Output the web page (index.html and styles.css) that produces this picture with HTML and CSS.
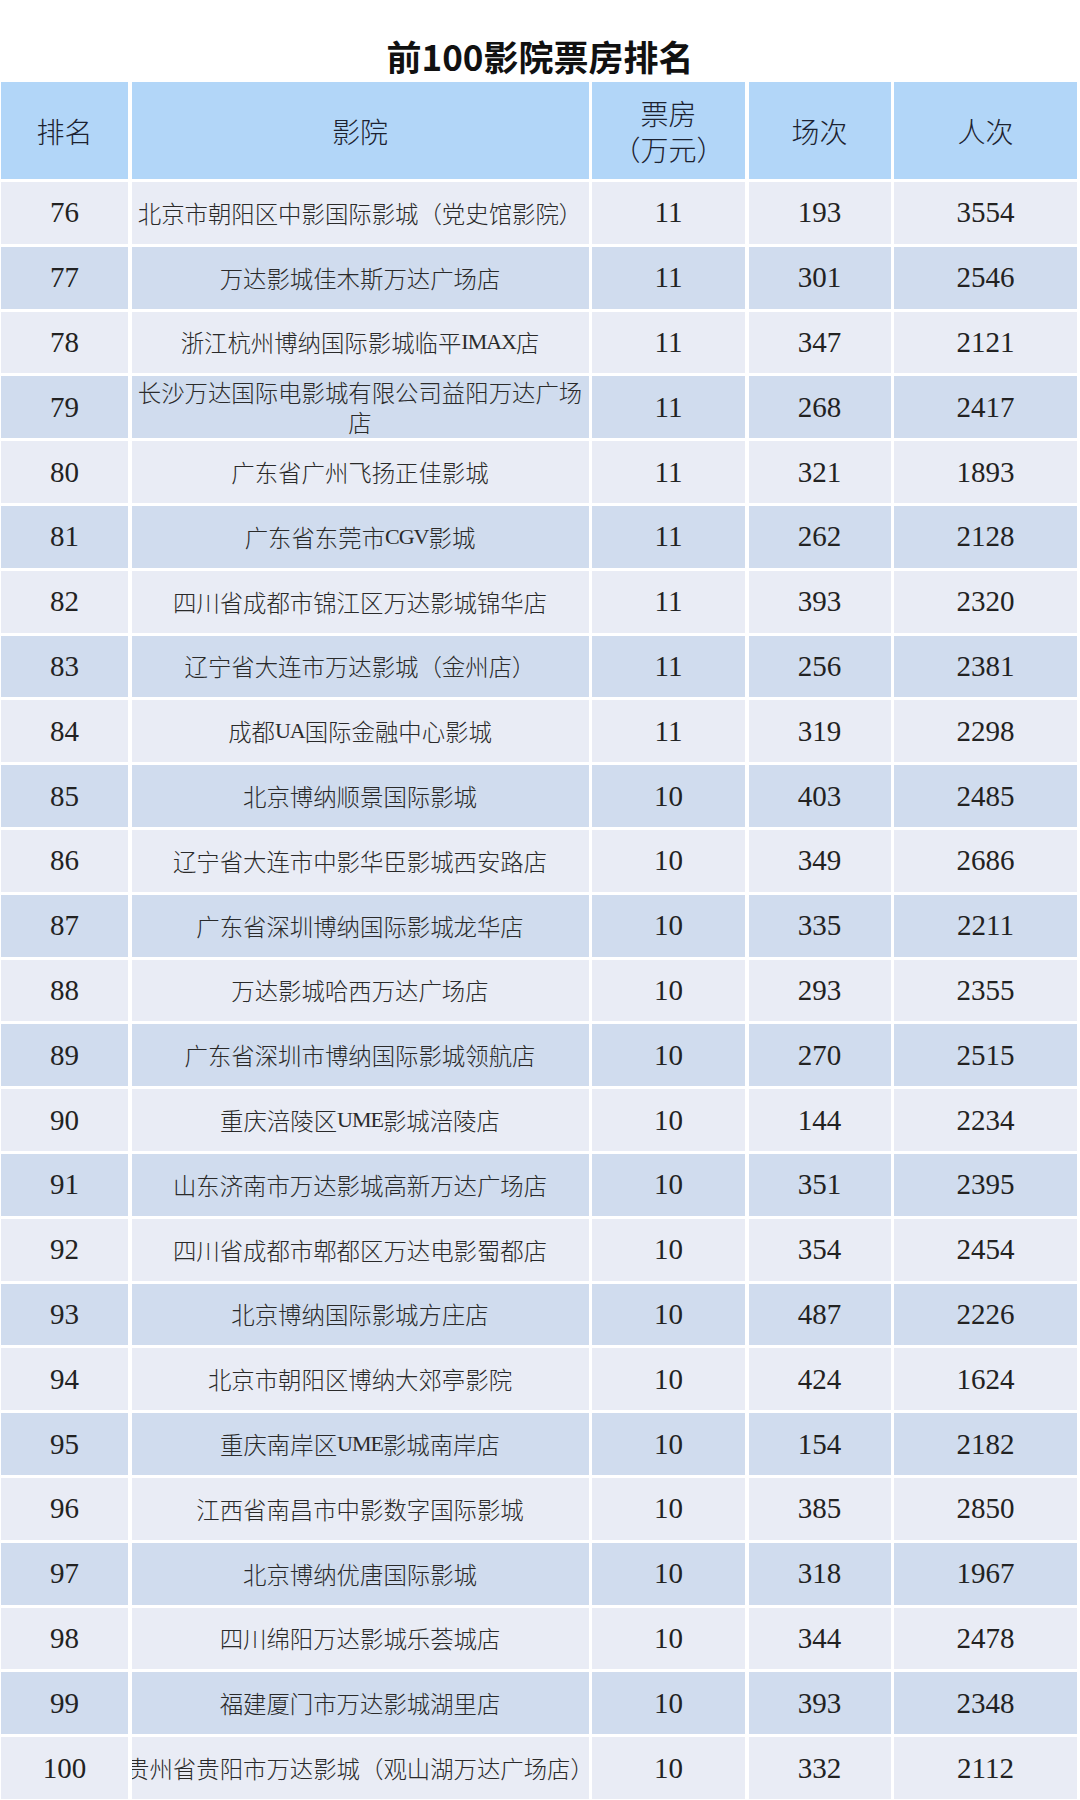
FILE: index.html
```html
<!DOCTYPE html>
<html lang="zh-CN">
<head>
<meta charset="utf-8">
<title>前100影院票房排名</title>
<link rel="stylesheet" href="styles.css">
</head>
<body>
<h1 class="title">前100影院票房排名</h1>
<div class="table">
  <div class="row head">
    <div class="cell">排名</div>
    <div class="cell">影院</div>
    <div class="cell two">票房<br>（万元）</div>
    <div class="cell">场次</div>
    <div class="cell">人次</div>
  </div>
  <div class="row a"><div class="cell num">76</div><div class="cell name">北京市朝阳区中影国际影城（党史馆影院）</div><div class="cell num">11</div><div class="cell num">193</div><div class="cell num">3554</div></div>
  <div class="row b"><div class="cell num">77</div><div class="cell name">万达影城佳木斯万达广场店</div><div class="cell num">11</div><div class="cell num">301</div><div class="cell num">2546</div></div>
  <div class="row a"><div class="cell num">78</div><div class="cell name">浙江杭州博纳国际影城临平<span class="lat">IMAX</span>店</div><div class="cell num">11</div><div class="cell num">347</div><div class="cell num">2121</div></div>
  <div class="row b"><div class="cell num">79</div><div class="cell name">长沙万达国际电影城有限公司益阳万达广场店</div><div class="cell num">11</div><div class="cell num">268</div><div class="cell num">2417</div></div>
  <div class="row a"><div class="cell num">80</div><div class="cell name">广东省广州飞扬正佳影城</div><div class="cell num">11</div><div class="cell num">321</div><div class="cell num">1893</div></div>
  <div class="row b"><div class="cell num">81</div><div class="cell name">广东省东莞市<span class="lat">CGV</span>影城</div><div class="cell num">11</div><div class="cell num">262</div><div class="cell num">2128</div></div>
  <div class="row a"><div class="cell num">82</div><div class="cell name">四川省成都市锦江区万达影城锦华店</div><div class="cell num">11</div><div class="cell num">393</div><div class="cell num">2320</div></div>
  <div class="row b"><div class="cell num">83</div><div class="cell name">辽宁省大连市万达影城（金州店）</div><div class="cell num">11</div><div class="cell num">256</div><div class="cell num">2381</div></div>
  <div class="row a"><div class="cell num">84</div><div class="cell name">成都<span class="lat">UA</span>国际金融中心影城</div><div class="cell num">11</div><div class="cell num">319</div><div class="cell num">2298</div></div>
  <div class="row b"><div class="cell num">85</div><div class="cell name">北京博纳顺景国际影城</div><div class="cell num">10</div><div class="cell num">403</div><div class="cell num">2485</div></div>
  <div class="row a"><div class="cell num">86</div><div class="cell name">辽宁省大连市中影华臣影城西安路店</div><div class="cell num">10</div><div class="cell num">349</div><div class="cell num">2686</div></div>
  <div class="row b"><div class="cell num">87</div><div class="cell name">广东省深圳博纳国际影城龙华店</div><div class="cell num">10</div><div class="cell num">335</div><div class="cell num">2211</div></div>
  <div class="row a"><div class="cell num">88</div><div class="cell name">万达影城哈西万达广场店</div><div class="cell num">10</div><div class="cell num">293</div><div class="cell num">2355</div></div>
  <div class="row b"><div class="cell num">89</div><div class="cell name">广东省深圳市博纳国际影城领航店</div><div class="cell num">10</div><div class="cell num">270</div><div class="cell num">2515</div></div>
  <div class="row a"><div class="cell num">90</div><div class="cell name">重庆涪陵区<span class="lat">UME</span>影城涪陵店</div><div class="cell num">10</div><div class="cell num">144</div><div class="cell num">2234</div></div>
  <div class="row b"><div class="cell num">91</div><div class="cell name">山东济南市万达影城高新万达广场店</div><div class="cell num">10</div><div class="cell num">351</div><div class="cell num">2395</div></div>
  <div class="row a"><div class="cell num">92</div><div class="cell name">四川省成都市郫都区万达电影蜀都店</div><div class="cell num">10</div><div class="cell num">354</div><div class="cell num">2454</div></div>
  <div class="row b"><div class="cell num">93</div><div class="cell name">北京博纳国际影城方庄店</div><div class="cell num">10</div><div class="cell num">487</div><div class="cell num">2226</div></div>
  <div class="row a"><div class="cell num">94</div><div class="cell name">北京市朝阳区博纳大郊亭影院</div><div class="cell num">10</div><div class="cell num">424</div><div class="cell num">1624</div></div>
  <div class="row b"><div class="cell num">95</div><div class="cell name">重庆南岸区<span class="lat">UME</span>影城南岸店</div><div class="cell num">10</div><div class="cell num">154</div><div class="cell num">2182</div></div>
  <div class="row a"><div class="cell num">96</div><div class="cell name">江西省南昌市中影数字国际影城</div><div class="cell num">10</div><div class="cell num">385</div><div class="cell num">2850</div></div>
  <div class="row b"><div class="cell num">97</div><div class="cell name">北京博纳优唐国际影城</div><div class="cell num">10</div><div class="cell num">318</div><div class="cell num">1967</div></div>
  <div class="row a"><div class="cell num">98</div><div class="cell name">四川绵阳万达影城乐荟城店</div><div class="cell num">10</div><div class="cell num">344</div><div class="cell num">2478</div></div>
  <div class="row b"><div class="cell num">99</div><div class="cell name">福建厦门市万达影城湖里店</div><div class="cell num">10</div><div class="cell num">393</div><div class="cell num">2348</div></div>
  <div class="row a"><div class="cell num">100</div><div class="cell name nowrap"><span class="in">贵州省贵阳市万达影城（观山湖万达广场店）</span></div><div class="cell num">10</div><div class="cell num">332</div><div class="cell num">2112</div></div>
</div>
</body>
</html>
```

FILE: styles.css
```css
html, body {
  margin: 0;
  padding: 0;
  background: #ffffff;
}

body {
  width: 1080px;
  height: 1800px;
  overflow: hidden;
  font-family: "Liberation Serif", "Noto Sans CJK SC", serif;
  color: #222222;
}

.title {
  margin: 0;
  padding: 38px 0 8px;
  height: 36px;
  line-height: 36px;
  font-family: "Noto Sans CJK SC", "Noto Sans", sans-serif;
  font-weight: 700;
  font-size: 35px;
  letter-spacing: 0;
  text-align: center;
  color: #111111;
}

.table {
  display: flex;
  flex-direction: column;
  gap: 3px;
  margin-left: 1px;
  width: 1076px;
}

.row {
  display: grid;
  grid-template-columns: 127px 457px 153px 142px 183px;
  column-gap: 3.5px;
  height: 61.8px;
}

.row.head {
  height: 97px;
}

.cell {
  display: flex;
  align-items: center;
  justify-content: center;
  text-align: center;
  overflow: hidden;
}

.head .cell {
  background: #b2d6f8;
  font-family: "Noto Sans CJK SC", sans-serif;
  font-weight: 300;
  font-size: 28px;
  line-height: 36px;
  color: #1c2230;
}

.row.a .cell {
  background: #e9ecf5;
}

.row.b .cell {
  background: #d0dcee;
}

.num {
  font-family: "Liberation Serif", serif;
  font-size: 29px;
  color: #222222;
}

.name {
  font-family: "Noto Sans CJK SC", sans-serif;
  font-weight: 300;
  font-size: 23.4px;
  line-height: 30px;
  color: #2a2a2a;
  padding: 0 3px;
}

.lat {
  font-family: "Liberation Serif", serif;
  font-size: 22px;
  letter-spacing: -1px;
}

.nowrap {
  white-space: nowrap;
  padding: 0;
}

.nowrap .in {
  flex: none;
}
```
